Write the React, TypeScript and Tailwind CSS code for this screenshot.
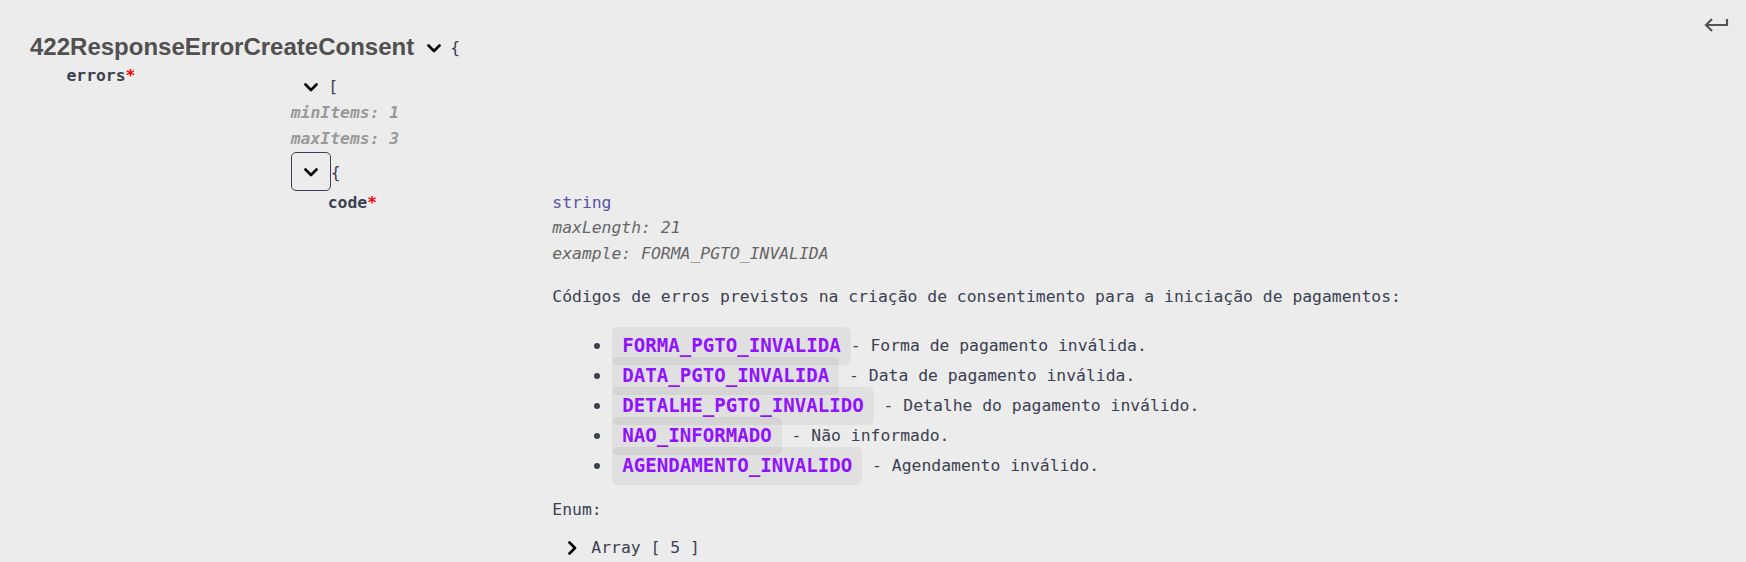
import type { ReactNode } from 'react';

const mono = "font-['DejaVu_Sans_Mono',monospace]";

function ChevronDown({ className = '' }: { className?: string }) {
  return (
    <svg width="14" height="9" viewBox="0 0 14 9" className={className}>
      <path d="M1.5 1.5 L7 7 L12.5 1.5" fill="none" stroke="#000" strokeWidth="2.6" strokeLinecap="round" strokeLinejoin="round" />
    </svg>
  );
}

function ChevronRight({ className = '' }: { className?: string }) {
  return (
    <svg width="9" height="14" viewBox="0 0 9 14" className={className}>
      <path d="M1.5 1.5 L7 7 L1.5 12.5" fill="none" stroke="#000" strokeWidth="2.6" strokeLinecap="round" strokeLinejoin="round" />
    </svg>
  );
}

function ReturnIcon() {
  return (
    <svg width="26" height="16" viewBox="0 0 26 16">
      <path d="M23 1 V7 H2" fill="none" stroke="#555" strokeWidth="2.2" />
      <path d="M8 1 L2 7 L8 13" fill="none" stroke="#555" strokeWidth="2.2" />
    </svg>
  );
}

const enums: { code: string; text: string }[] = [
  { code: 'FORMA_PGTO_INVALIDA', text: '- Forma de pagamento inválida.' },
  { code: 'DATA_PGTO_INVALIDA', text: ' - Data de pagamento inválida.' },
  { code: 'DETALHE_PGTO_INVALIDO', text: ' - Detalhe do pagamento inválido.' },
  { code: 'NAO_INFORMADO', text: ' - Não informado.' },
  { code: 'AGENDAMENTO_INVALIDO', text: ' - Agendamento inválido.' },
];

function Line({ className = '', children }: { className?: string; children: ReactNode }) {
  return <div className={`flex items-center ${className}`}>{children}</div>;
}

export default function App() {
  return (
    <div className={`relative h-[562px] w-full overflow-hidden bg-[#ececec] text-[#3b4151] ${mono} text-[16.4px]`}>
      <button className="absolute right-[16px] top-[18px]">
        <ReturnIcon />
      </button>

      <div className="pl-[30px] pt-[32px]">
        {/* model title */}
        <div className="flex h-[30px] items-center">
          <span className="font-['Liberation_Sans',Arial,sans-serif] text-[24px] font-bold text-[#505050]">
            422ResponseErrorCreateConsent
          </span>
          <ChevronDown className="ml-[13px] mt-[2px]" />
          <span className="ml-[9px] mt-[2px]">{'{'}</span>
        </div>

        <div className="mt-[2px] flex">
          <div className="w-[260.7px] shrink-0 pl-[36.4px] leading-[24px] font-semibold">
            errors<span className="text-[#f00]">*</span>
          </div>

          <div className="pt-[10px]">
            <Line className="h-[26px] pl-[13.6px]">
              <ChevronDown />
              <span className="ml-[10px]">[</span>
            </Line>
            <Line className="h-[26px] font-bold italic text-[#999]">minItems: 1</Line>
            <Line className="h-[26px] font-bold italic text-[#999]">maxItems: 3</Line>
            <Line className="h-[39px]">
              <button className="flex h-[39px] w-[40px] items-center justify-center rounded-[5px] border-[1.5px] border-[#3b4151]">
                <ChevronDown className="mt-[2px]" />
              </button>
              <span className="mt-[4px]">{'{'}</span>
            </Line>

            <div className="flex">
              <div className="w-[261.6px] shrink-0 pl-[37px] leading-[24px] font-semibold">
                code<span className="text-[#f00]">*</span>
              </div>

              <div>
                <Line className="h-[24px] text-[#55a]">string</Line>
                <Line className="h-[26px] italic text-[#666]">maxLength: 21</Line>
                <Line className="h-[26px] italic text-[#666]">example: FORMA_PGTO_INVALIDA</Line>

                <Line className="mt-[17px] h-[26px]">
                  Códigos de erros previstos na criação de consentimento para a iniciação de pagamentos:
                </Line>

                <ul className="mt-[21px]">
                  {enums.map((e) => (
                    <li key={e.code} className="flex h-[30px] items-center pl-[42px]">
                      <span className="mr-[12px] h-[6px] w-[6px] shrink-0 rounded-full bg-[#3b4151]" />
                      <code className={`${mono} rounded-[6px] bg-black/5 px-[10px] py-[8px] text-[19.1px] leading-[22px] font-semibold text-[#9012fe]`}>
                        {e.code}
                      </code>
                      <span className="whitespace-pre">{e.text}</span>
                    </li>
                  ))}
                </ul>

                <Line className="mt-[16px] h-[26px]">Enum:</Line>
                <Line className="mt-[12px] h-[26px] pl-[16px]">
                  <ChevronRight />
                  <span className="ml-[14px]">Array [ 5 ]</span>
                </Line>
              </div>
            </div>
          </div>
        </div>
      </div>
    </div>
  );
}
